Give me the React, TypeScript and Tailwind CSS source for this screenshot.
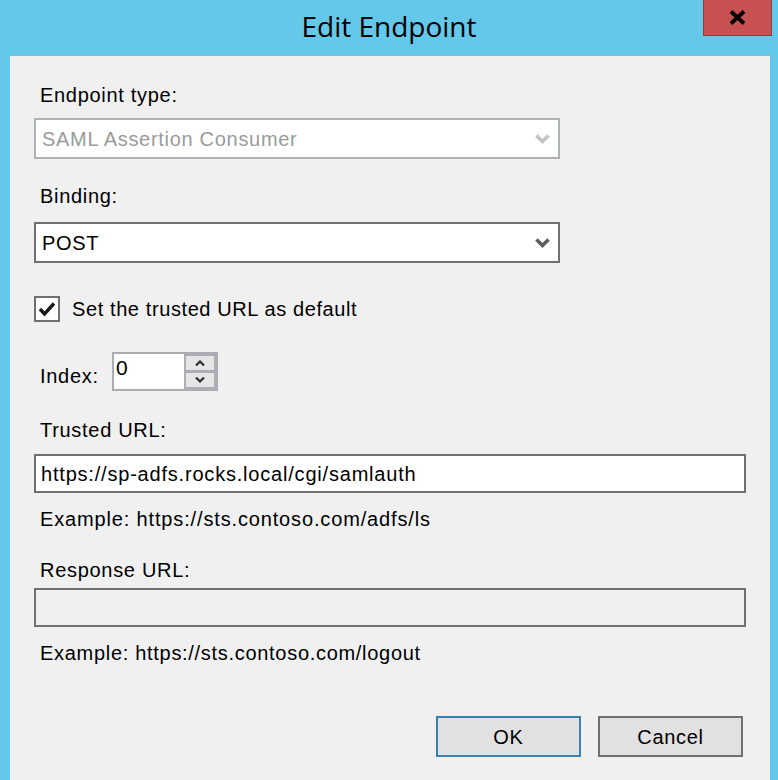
import React from "react";

const body = { fontFamily: '"Liberation Sans", Arial, sans-serif' };

function Chevron({ color }: { color: string }) {
  return (
    <svg width="15" height="12" viewBox="0 0 15 12" className="shrink-0">
      <polyline points="1.5,2.5 7.5,8.5 13.5,2.5" fill="none" stroke={color} strokeWidth="3.6" strokeLinejoin="miter" />
    </svg>
  );
}

function Label({ children, className = "" }: { children: React.ReactNode; className?: string }) {
  return (
    <div className={"h-[23px] leading-[23px] text-[20px] tracking-[0.7px] text-black whitespace-nowrap " + className}>
      {children}
    </div>
  );
}

export default function App() {
  return (
    <div className="w-[778px] h-[780px] bg-[#64c8ea] relative overflow-hidden flex flex-col" style={body}>
      {/* title bar */}
      <div className="h-[55px] shrink-0 pt-[7px] text-center">
        <div className="text-[28px] leading-[38px] text-black" style={{ fontFamily: '"Open Sans", "Noto Sans", sans-serif' }}>
          Edit Endpoint
        </div>
      </div>
      <div className="absolute top-0 right-[6px] w-[69px] h-[36px] bg-[#c75050] border border-t-0 border-[#8a3f3b] flex items-center justify-center">
        <svg width="17" height="15" viewBox="0 0 17 15">
          <path d="M2 1.5 L15 13.5 M15 1.5 L2 13.5" stroke="#000" strokeWidth="3.8" />
        </svg>
      </div>

      {/* dialog body */}
      <div className="ml-[10px] mr-[8px] flex-1 bg-[#f0f0f0] border-t border-[#93b7c9] pl-[24px] pr-[24px] pt-[28px] flex flex-col">
        <Label className="pl-[6px]">Endpoint type:</Label>
        <div className="mt-[11px] w-[526px] h-[41px] border-2 border-[#adb2b5] bg-white flex items-center pl-[6px] pr-[8px]">
          <span className="flex-1 text-[20px] tracking-[0.7px] text-[#9a9a9a]">SAML Assertion Consumer</span>
          <Chevron color="#c2c2c2" />
        </div>

        <Label className="pl-[6px] mt-[26px]">Binding:</Label>
        <div className="mt-[14px] w-[526px] h-[41px] border-2 border-[#707070] bg-white flex items-center pl-[6px] pr-[8px]">
          <span className="flex-1 text-[20px] tracking-[0.7px] text-black">POST</span>
          <Chevron color="#5f5f5f" />
        </div>

        <div className="mt-[33px] h-[26px] flex items-center gap-[12px]">
          <div className="w-[26px] h-[26px] border-2 border-[#707070] bg-white flex items-center justify-center">
            <svg width="18" height="16" viewBox="0 0 18 16">
              <polyline points="2,8 6.5,13 16,2.5" fill="none" stroke="#1a1a1a" strokeWidth="3.4" />
            </svg>
          </div>
          <span className="text-[20px] tracking-[0.6px] leading-[23px] text-black">Set the trusted URL as default</span>
        </div>

        <div className="mt-[30px] flex items-start">
          <Label className="pl-[6px] mt-[13px] w-[78px]">Index:</Label>
          <div className="flex bg-[#abadb3] p-[2px] h-[39px]">
            <div className="w-[70px] h-[35px] bg-white pl-[2px] text-[21px] leading-[28px] text-black">0</div>
            <div className="w-[32px] h-[35px] p-[2px] flex flex-col gap-[3px]">
              <div className="h-[14px] bg-[#e5e5e5] flex items-center justify-center">
                <svg width="10" height="6" viewBox="0 0 10 6">
                  <polyline points="1,5.5 5,1.5 9,5.5" fill="none" stroke="#2b2b2b" strokeWidth="2.2" />
                </svg>
              </div>
              <div className="h-[14px] bg-[#e5e5e5] flex items-center justify-center">
                <svg width="10" height="6" viewBox="0 0 10 6">
                  <polyline points="1,0.5 5,4.5 9,0.5" fill="none" stroke="#2b2b2b" strokeWidth="2.2" />
                </svg>
              </div>
            </div>
          </div>
        </div>

        <Label className="pl-[6px] mt-[28px]">Trusted URL:</Label>
        <div className="mt-[12px] w-full h-[39px] border-2 border-[#707070] bg-white flex items-center pl-[5px]">
          <span className="text-[20px] tracking-[0.8px] text-black">https://sp-adfs.rocks.local/cgi/samlauth</span>
        </div>
        <Label className="pl-[6px] mt-[15px] tracking-[0.85px]">Example: https://sts.contoso.com/adfs/ls</Label>

        <Label className="pl-[6px] mt-[28px]">Response URL:</Label>
        <div className="mt-[6px] w-full h-[39px] border-2 border-[#707070] bg-[#f0f0f0]" />
        <Label className="pl-[6px] mt-[15px]">Example: https://sts.contoso.com/logout</Label>

        <div className="mt-[51px] flex justify-end gap-[17px] mr-[3px]">
          <div className="w-[145px] h-[41px] border-2 border-[#3c7fb1] bg-[#e1e1e1] flex items-center justify-center text-[20px] tracking-[0.7px] text-black">
            OK
          </div>
          <div className="w-[145px] h-[41px] border-2 border-[#707070] bg-[#e1e1e1] flex items-center justify-center text-[20px] tracking-[0.7px] text-black">
            Cancel
          </div>
        </div>
      </div>
    </div>
  );
}
